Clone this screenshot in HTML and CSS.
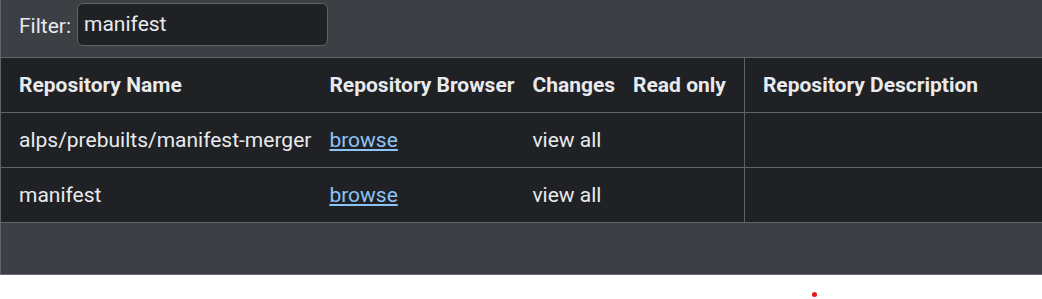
FILE: index.html
```html
<!DOCTYPE html>
<html lang="en">

<head>
    <meta charset="UTF-8">
    <meta name="viewport" content="width=device-width, initial-scale=1.0">
    <title>Repositories</title>
    <link rel="stylesheet" href="styles.css">
</head>

<body>
    <div class="panel">
        <!-- filter bar -->
        <div class="filter-bar">
            <label for="filter">Filter:</label>
            <input type="text" id="filter" value="manifest">
        </div>

        <table class="repo-table">
            <thead>
                <tr>
                    <th>Repository Name</th>
                    <th>Repository Browser</th>
                    <th>Changes</th>
                    <th class="ro">Read only</th>
                    <th class="desc">Repository Description</th>
                </tr>
            </thead>
            <tbody>
                <tr>
                    <td>alps/prebuilts/manifest-merger</td>
                    <td><a href="#">browse</a></td>
                    <td>view all</td>
                    <td class="ro"></td>
                    <td class="desc"></td>
                </tr>
                <tr>
                    <td>manifest</td>
                    <td><a href="#">browse</a></td>
                    <td>view all</td>
                    <td class="ro"></td>
                    <td class="desc"></td>
                </tr>
            </tbody>
        </table>
        <div class="footer-space"></div>
    </div>
    <span class="dot"></span>
</body>

</html>
```

FILE: styles.css
```css
/* base */
body {
    margin: 0;
    font-family: Roboto, "Liberation Sans", Arial, sans-serif;
    font-size: 21px;
    color: #e8eaed;
    background: #fff;
    height: 299px;
    position: relative;
}

.panel { /* grey outer box */
    background: #3c3f43;
    border-left: 1px solid #5f6368;
    border-bottom: 1px solid #6a6d70;
}

.filter-bar {
    height: 57px;
    display: flex;
    align-items: center;
    padding-left: 18px;
    box-sizing: border-box;
}

.filter-bar label {
    margin-right: 6px;
    margin-top: -5px;
}

.filter-bar input {
    width: 251px;
    height: 43px;
    box-sizing: border-box;
    margin-top: -9px;
    background: #202124;
    border: 1px solid #5f6368;
    border-radius: 6px;
    color: #e8eaed;
    font: inherit;
    padding: 0 6px;
    outline: none;
}

.repo-table {
    width: 100%;
    border-collapse: collapse;
    background: #202124;
}

.repo-table th,
.repo-table td {
    height: 54px;
    padding: 0 9px;
    border-top: 1px solid #5f6368;
    border-bottom: 1px solid #5f6368;
    text-align: left;
    white-space: nowrap;
}

.repo-table th {
    font-weight: bold;
}

.repo-table th:first-child,
.repo-table td:first-child {
    padding-left: 18px;
}

.repo-table .ro {
    padding-right: 18px;
}

.repo-table .desc {
    border-left: 1px solid #5f6368;
    padding-left: 18px;
    width: 100%;
}

.repo-table a {
    color: #8cc4f7;
}

.footer-space {
    height: 51px;
}

.dot { /* small red marker */
    position: absolute;
    left: 812px;
    top: 292px;
    width: 5px;
    height: 5px;
    border-radius: 50%;
    background: #e8141c;
}
```
